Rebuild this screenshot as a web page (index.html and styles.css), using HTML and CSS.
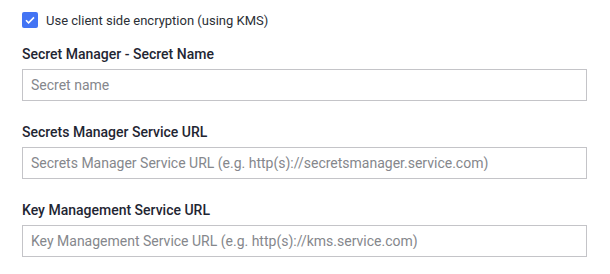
FILE: index.html
```html
<!DOCTYPE html>
<html lang="en">
<head>
    <meta charset="UTF-8">
    <meta name="viewport" content="width=device-width, initial-scale=1.0">
    <title>Client side encryption</title>
    <link rel="stylesheet" href="styles.css">
</head>
<body>
    <div class="form">
        <label class="check-row">
            <span class="checkbox">
                <svg viewBox="0 0 16 16" width="16" height="16">
                    <path d="M4 8.2l2.6 2.6L12 5.4" fill="none" stroke="#fff" stroke-width="1.6"/>
                </svg>
            </span>
            Use client side encryption (using KMS)
        </label>

        <div class="field">
            <label class="field-label">Secret Manager - Secret Name</label>
            <input type="text" placeholder="Secret name">
        </div>

        <div class="field">
            <label class="field-label">Secrets Manager Service URL</label>
            <input type="text" placeholder="Secrets Manager Service URL (e.g. http(s)://secretsmanager.service.com)">
        </div>

        <div class="field">
            <label class="field-label">Key Management Service URL</label>
            <input type="text" placeholder="Key Management Service URL (e.g. http(s)://kms.service.com)">
        </div>
    </div>
</body>
</html>
```

FILE: styles.css
```css
body {
    margin: 0;
    font-family: Roboto, 'Liberation Sans', Arial, sans-serif;
    background-color: #fff;
    color: #1f2633;
}
.form {
    padding: 10px 23px 0 22px;
    display: flex;
    flex-direction: column;
}
.check-row {
    display: flex;
    align-items: center;
    gap: 8px;
    height: 20px;
    font-size: 13px;
    color: #2b2f36;
    margin-bottom: 14px;
}
.checkbox {
    width: 16px;
    height: 16px;
    background-color: #4374f4;
    border-radius: 2px;
    display: flex;
}
.field {
    display: flex;
    flex-direction: column;
    margin-bottom: 21px;
}
.field-label {
    font-size: 14px;
    font-weight: 500;
    line-height: 20px;
    margin-bottom: 5px;
}
input {
    height: 32px;
    box-sizing: border-box;
    border: 1px solid #c4c4c8;
    border-radius: 0;
    padding: 0 8px;
    font-family: inherit;
    font-size: 14px;
    color: #333;
    outline: none;
}
input::placeholder {
    color: #85878c;
}
```
